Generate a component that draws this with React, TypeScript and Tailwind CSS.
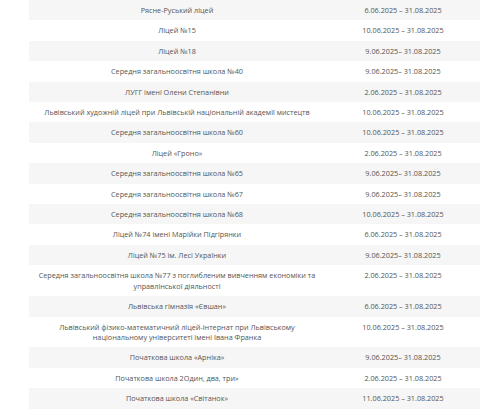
import React from "react";

const rows: [string, string][] = [
  ["Рясне-Руський ліцей", "6.06.2025 – 31.08.2025"],
  ["Ліцей №15", "10.06.2025 – 31.08.2025"],
  ["Ліцей №18", "9.06.2025– 31.08.2025"],
  ["Середня загальноосвітня школа №40", "9.06.2025– 31.08.2025"],
  ["ЛУГГ імені Олени Степанівни", "2.06.2025 – 31.08.2025"],
  ["Львівський художній ліцей при Львівській національній академії мистецтв", "10.06.2025 – 31.08.2025"],
  ["Середня загальноосвітня школа №60", "10.06.2025 – 31.08.2025"],
  ["Ліцей «Гроно»", "2.06.2025 – 31.08.2025"],
  ["Середня загальноосвітня школа №65", "9.06.2025– 31.08.2025"],
  ["Середня загальноосвітня школа №67", "9.06.2025– 31.08.2025"],
  ["Середня загальноосвітня школа №68", "10.06.2025 – 31.08.2025"],
  ["Ліцей №74 імені Марійки Підгірянки", "6.06.2025 – 31.08.2025"],
  ["Ліцей №75 ім. Лесі Українки", "9.06.2025– 31.08.2025"],
  ["Середня загальноосвітня школа №77 з поглибленим вивченням економіки та управлінської діяльності", "2.06.2025 – 31.08.2025"],
  ["Львівська гімназія «Євшан»", "6.06.2025 – 31.08.2025"],
  ["Львівський фізико-математичний ліцей-інтернат при Львівському національному університеті імені Івана Франка", "10.06.2025 – 31.08.2025"],
  ["Початкова школа «Арніка»", "9.06.2025– 31.08.2025"],
  ["Початкова школа 2Один, два, три»", "2.06.2025 – 31.08.2025"],
  ["Початкова школа «Світанок»", "11.06.2025 – 31.08.2025"],
];

export default function App() {
  return (
    <div className="w-[480px] h-[416px] overflow-hidden bg-white" style={{ fontFamily: '"Open Sans", "Noto Sans", sans-serif' }}>
      <div className="ml-[29px] w-[452px]">
        <table className="w-[452px] table-fixed border-collapse text-[7.25px] leading-[10.4px] text-[#555]">
          <colgroup>
            <col className="w-[296px]" />
            <col className="w-[156px]" />
          </colgroup>
          <tbody>
            {rows.map(([name, date], i) => (
              <tr key={i} className={i % 2 === 0 ? "bg-[#f6f6f6]" : "bg-white"}>
                <td className="px-2 py-[5px] align-top text-center">{name}</td>
                <td className="px-2 py-[5px] align-top text-center">{date}</td>
              </tr>
            ))}
          </tbody>
        </table>
      </div>
    </div>
  );
}
